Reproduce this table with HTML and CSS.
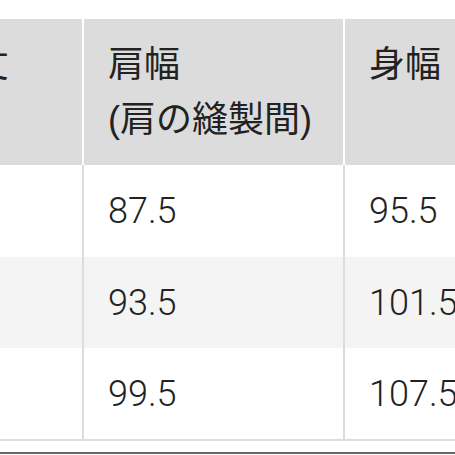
FILE: index.html
```html
<!DOCTYPE html>
<html lang="ja">
<head>
<meta charset="utf-8">
<link rel="stylesheet" href="styles.css">
</head>
<body>
<div class="wrap">
  <table class="size-table">
    <colgroup>
      <col class="c1"><col class="c2"><col class="c3">
    </colgroup>
    <thead>
      <tr>
        <th>着丈</th>
        <th>肩幅<br>(肩の縫製間)</th>
        <th>身幅</th>
      </tr>
    </thead>
    <tbody>
      <tr class="r1"><td></td><td>87.5</td><td>95.5</td></tr>
      <tr class="r2"><td></td><td>93.5</td><td>101.5</td></tr>
      <tr class="r3"><td></td><td>99.5</td><td>107.5</td></tr>
    </tbody>
  </table>
  <div class="footer-line"></div>
</div>
</body>
</html>
```

FILE: styles.css
```css
html, body {
  margin: 0;
  padding: 0;
  background: #ffffff;
  overflow: hidden;
}

.wrap {
  width: 455px;
  height: 455px;
  overflow: hidden;
  padding-top: 19px;
  box-sizing: border-box;
}

.size-table {
  margin-left: -87px;
  width: 720px;
  table-layout: fixed;
  border-collapse: collapse;
  font-family: "Liberation Sans", "Noto Sans CJK JP", sans-serif;
  color: #222222;
  border-bottom: 2px solid #dddddd;
}

.c1 { width: 170px; }
.c2 { width: 261px; }
.c3 { width: 289px; }

.size-table th {
  background: #dcdcdc;
  font-weight: normal;
  font-size: 36px;
  line-height: 55px;
  text-align: left;
  vertical-align: top;
  padding: 18px 24px 18px 24px;
  border-right: 2px solid #ffffff;
  white-space: nowrap;
}

.size-table td {
  font-family: Roboto, "Liberation Sans", sans-serif;
  font-weight: 300;
  font-size: 36px;
  line-height: 40px;
  text-align: left;
  vertical-align: middle;
  padding: 0 24px;
  border-right: 2px solid #dcdcdc;
  white-space: nowrap;
}

.r1 td { height: 92px; background: #ffffff; }
.r2 td { height: 91px; background: #f4f4f4; }
.r3 td { height: 91px; background: #ffffff; }

.footer-line {
  margin-top: 11px;
  border-top: 2px solid #666666;
}
```
